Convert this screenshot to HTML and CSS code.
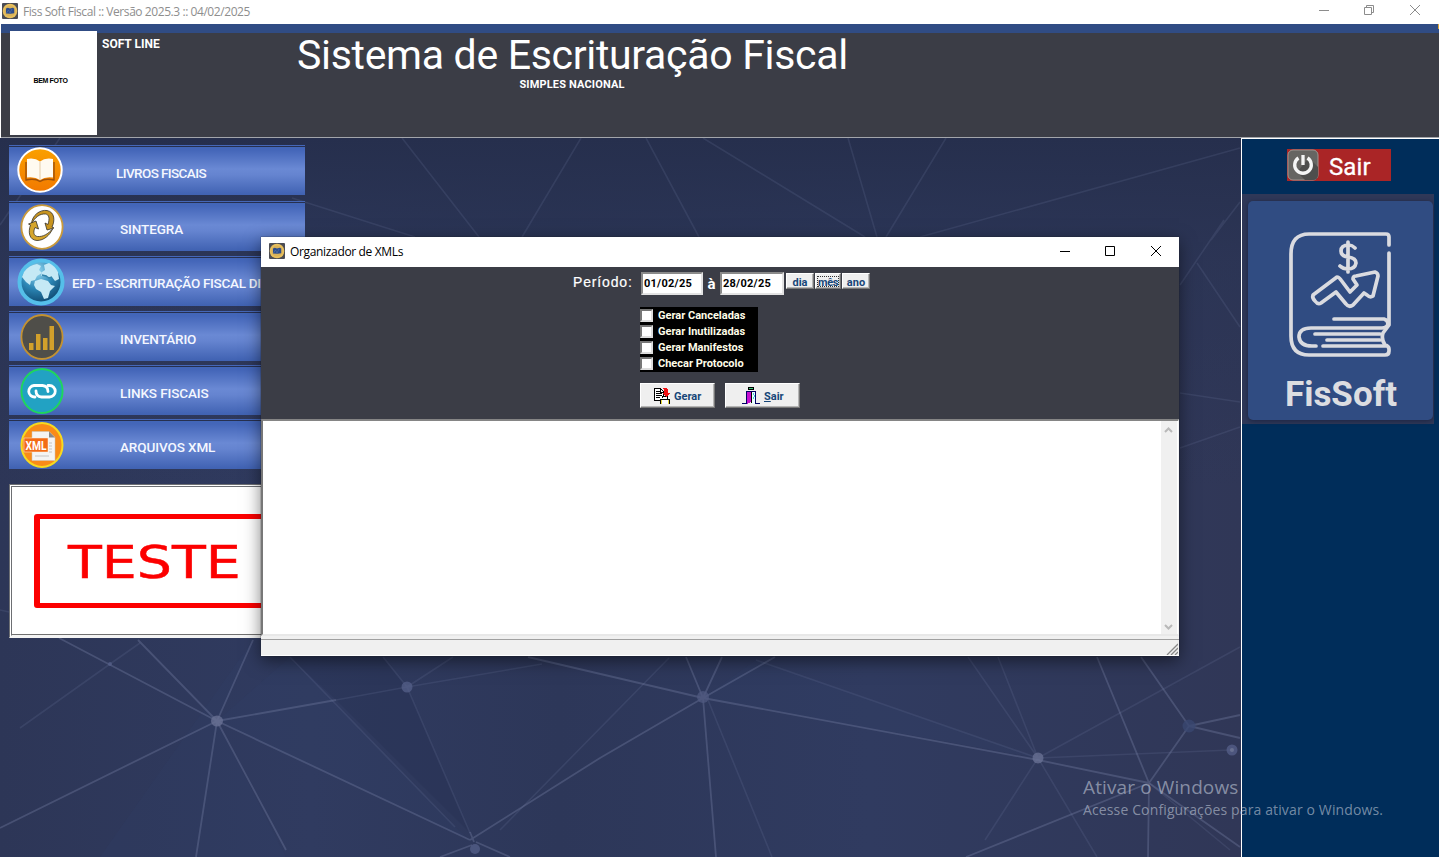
FILE: index.html
```html
<!DOCTYPE html>
<html lang="pt-BR">
<head>
<meta charset="utf-8">
<title>Fiss Soft Fiscal</title>
<link rel="stylesheet" href="styles.css">
</head>
<body>
<svg class="defs" width="0" height="0">
  <symbol id="app" viewBox="0 0 16 16">
    <rect width="16" height="16" rx="1" fill="#4b4c54"/>
    <circle cx="8" cy="8" r="7.3" fill="#e9c05c"/>
    <circle cx="8" cy="8" r="5.6" fill="#d9b25a"/>
    <path d="M4 10.600V5.600l1.800-.8L8 5.600l2.800-.8 1.400.7v4.800l-3.600.4z" fill="#2c4c8c"/>
    <path d="M4.500 10l2-3 1.500 3 2-4" stroke="#5772a4" stroke-width=".7" fill="none"/>
  </symbol>
</svg>
<div class="app">
  <div class="titlebar">
    <svg class="appicon" width="16" height="16"><use href="#app"/></svg>
    <span class="title">Fiss Soft Fiscal :: Versão 2025.3 :: 04/02/2025</span>
    <svg class="winbtns" width="104" height="16" viewBox="0 0 104 16" fill="none" stroke="#8c8c8c">
      <path d="M1 8.500h10M46.500 5.500h7v7h-7zM48.500 5.500v-2h7v7h-2M92 3l10 10M102 3l-10 10"/>
    </svg>
  </div>
  <header class="header">
    <div class="photo">BEM FOTO</div>
    <div class="company">SOFT LINE</div>
    <div class="heading">
      <h1>Sistema de Escrituração Fiscal</h1>
      <p>SIMPLES NACIONAL</p>
    </div>
    <i class="speck"></i>
  </header>
  <div class="main">
    <div class="desk">
      <svg class="net" width="1241" height="719" viewBox="0 138 1241 719">
        <path fill="#34426b" opacity=".2" d="M217 721L290 657L455 827L470 840zM217 721L253 640L100 857H286zM703 698L1038 758L756 660z"/>
        <path fill="#262e50" opacity=".3" d="M290 657L336 700L470 833L407 687L383 657z"/>
        <g fill="none" stroke="#8189ad" stroke-width="1.800" opacity=".32">
          <path d="M217 721L138 640M217 721L253 640M217 721L0 828M217 721L196 857M217 721L286 850M217 721L470 840M217 721L59 638M217 721L336 700M528 657L703 698M470 840L600 758L703 698M703 698L686 657M703 698L722 657M703 698L775 657M703 698L716 857M703 698L1038 760M1038 760L1149 783M1149 783L1097 657M1149 783L1189 726L1141 657M1189 726L1240 715M1189 726L1240 738M1149 783L966 857M1149 783L1148 857M1149 783L1240 847M472 845L440 857M476 842L510 857M470 832L474 842"/>
        </g>
        <g fill="none" stroke="#7780a6" stroke-width="1.600" opacity=".18">
          <path d="M336 700L407 687L383 657M407 687L453 657M407 687L542 664M407 687L470 833M290 657L455 827M140 643L110 664L20 728M669 658L500 830M708 700L772 857M1038 758L756 660M1038 758L968 657M1038 758L998 657M1038 758L1240 647M1038 758L1231 750M1038 758L985 840M1038 758L1097 857M1149 783L1230 850M402 138L479 237M581 138L522 237M646 138L699 237M703 138L865 237M848 138L877 237M946 138L886 237M1240 148L920 237M1240 202L1211 240M292 198L415 237M1224 220L1180 285M1197 263L1240 327M1180 393L1240 402M1180 448L1240 427M60 138L0 225M0 610L45 620"/>
        </g>
        <g fill="#6b7396" opacity=".75">
          <ellipse cx="217" cy="721" rx="6" ry="5.500"/><circle cx="407" cy="687" r="5.500" fill="#56608a"/><circle cx="703" cy="697" r="6" fill="#505a80"/><circle cx="1038" cy="758" r="5.500"/><circle cx="475" cy="849" r="5" fill="#56608a"/><circle cx="1189" cy="726" r="6.500" fill="#3a4872"/><circle cx="1232" cy="750" r="5.500" fill="#56608a"/><circle cx="1232" cy="750" r="2" fill="#7b83a5"/><circle cx="110" cy="664" r="2" fill="#56608a"/>
        </g>
      </svg>
      <nav class="menu">
        <a class="item first"><svg class="ic" width="46" height="46" viewBox="0 0 46 46">
          <defs><linearGradient id="or" x2="0" y2="1"><stop stop-color="#faa000"/><stop offset="1" stop-color="#f27900"/></linearGradient></defs>
          <circle cx="23" cy="23" r="21.700" fill="url(#or)" stroke="#fff" stroke-width="2"/>
          <path d="M9 15v18q9-2 14 1.500Q28 31 37 33V15" fill="none" stroke="#9e5009" stroke-width="1.400"/>
          <path d="M10 12Q18 10.500 23 14.500Q28 10.500 36 12V30.500Q28 29.500 23 33Q18 29.500 10 30.500z" fill="#fffaf0"/><path d="M23 14.500V33" stroke="#e4cba7"/></svg>
          <span>LIVROS FISCAIS</span></a>
        <a class="item"><svg class="ic" width="44" height="46" viewBox="0 0 44 46">
          <ellipse cx="22" cy="23" rx="20.600" ry="21.800" fill="#fff" stroke="#c99a3c" stroke-width="1.800"/>
          <path d="M11.500 20C12 11 20 5.500 27 6.500C35 8 35 17 32 23L34 24L27 26L25 19L28 20.500C30 14 29 10.500 25.500 10C20 9.500 15 13 11.500 20z" fill="#c89520" stroke="#333028" stroke-width=".8"/>
          <path d="M32.500 25C30 31 24 36.500 17 36.500C9 36 8 28 10.500 21L8.500 20L16 17L18.500 25L15 23.500C13 28 13.500 32 17.500 32.500C23 33 28 30 32.500 25z" fill="#d5a52c" stroke="#333028" stroke-width=".8"/></svg>
          <span>SINTEGRA</span></a>
        <a class="item efd"><svg class="ic" width="48" height="48" viewBox="0 0 48 48">
          <defs><radialGradient id="gl" cx=".4" cy=".25" r=".8"><stop stop-color="#9bdcf4"/><stop offset=".5" stop-color="#2b86b5"/><stop offset="1" stop-color="#0b4167"/></radialGradient></defs>
          <circle cx="24" cy="24" r="21.500" fill="url(#gl)" stroke="#55bfe9" stroke-width="4"/>
          <path d="M7 14q5-7 13-8l4 2-2 4 3 3-5 3-2 4-4 1-1 4-4-3-4-5zM27 7l5-2q6 3 9 9l1 7-4 2-3-4-4 1-2-3-5 1 1-4 3-2zM18 23l6-2 7 2 3 4 4 1-5 5-2 7-4 1-3-7-5-3-2-4z" fill="#c5e9f5"/>
          <path d="M25 17l4 1 3 2 3-1" fill="none" stroke="#3183aa" stroke-width="1.500"/></svg>
          <span>EFD - ESCRITURAÇÃO FISCAL DIGITAL</span></a>
        <a class="item"><svg class="ic" width="44" height="46" viewBox="0 0 44 46">
          <ellipse cx="22" cy="23" rx="20.600" ry="22" fill="#4f4e49" stroke="#c39231" stroke-width="1.800"/>
          <path d="M9 29h4.500v7H9zM16 20h4.500v16H16zM23 24h4.500v12H23zM29.500 12H34v24h-4.500z" fill="#d2a02b"/></svg>
          <span>INVENTÁRIO</span></a>
        <a class="item"><svg class="ic" width="44" height="46" viewBox="0 0 44 46">
          <ellipse cx="22" cy="23" rx="20.600" ry="22" fill="#22a2c3" stroke="#1fd65c" stroke-width="1.900"/>
          <g fill="none" stroke="#fff" stroke-width="2.800" stroke-linecap="round"><path d="M15 29a5.700 5.700 0 0 1 -1-11.500h8.500q5.500.5 5.500 6"/><path d="M28 17.500h1.500a5.700 5.700 0 0 1 0 11.500h-8q-5.500-.5-5.500-6"/></g></svg>
          <span>LINKS FISCAIS</span></a>
        <a class="item"><svg class="ic" width="44" height="46" viewBox="0 0 44 46">
          <ellipse cx="22" cy="23" rx="20.500" ry="21.900" fill="#f98b18" stroke="#f7d91f" stroke-width="2"/>
          <path d="M12 9.500h17l6 6v23H12z" fill="#f4f4f4" stroke="#c9c2b8" stroke-width=".5"/><path d="M29 9.500v6h6z" fill="#888"/>
          <path d="M29 21h3M29 24h3M29 27h3M29 30h3M15 34h14" stroke="#c4c4c4"/>
          <path d="M4 16h24v14H4z" fill="#f36b16" stroke="#fff1dd" stroke-width=".5"/>
          <text x="5.500" y="27.500" class="xml" textLength="21" lengthAdjust="spacingAndGlyphs">XML</text></svg>
          <span>ARQUIVOS XML</span></a>
      </nav>
      <div class="testbox"><div class="stamp"><span>TESTE</span></div></div>
    </div>
    <aside class="side">
      <a class="exit"><svg width="32" height="32" viewBox="0 0 32 32">
        <rect x="1" y="1" width="30" height="30" rx="5" fill="#666562" stroke="#a09690"/>
        <path d="M22 9l9 9v8q0 5-5 5h-8L10 23z" fill="#4e4e4d"/>
        <path d="M11.500 9a8.300 8.300 0 1 0 9 0M16 6v10" fill="none" stroke="#f5f5f5" stroke-width="3.300"/></svg><span>Sair</span></a>
      <div class="logo"><div class="card">
        <svg width="106" height="128" viewBox="0 0 106 128" fill="none" stroke="#dadbe0" stroke-width="3.700" stroke-linecap="round" stroke-linejoin="round">
          <path d="M102 14V6Q102 3 99 3H22Q4 3 4 23V105Q4 124 22 124H98Q102 124 102 120V118Q102 115 98 114Q94 108 96 102L102 94V22"/>
          <path d="M47 88H97Q101 89 101 93Q100 97 95 97H24Q12 97 12 106Q13 115 25 115H29M36 115H98M28 103H93M40 109H93"/>
          <path d="M26 64L50 46Q52 46 54 49L63 61L70 54L66 48Q66 45 69 45L88 41Q91 42 91 45L86 65Q83 67 80 64L77 62L66 74Q62 77 59 73L49 61L34 72Q31 74 28 70Q25 67 26 64z"/>
          <path d="M68 17Q65 14 62 14Q54 14 54 20Q54 25 61 26Q69 27 69 32Q68 38 61 38Q56 38 53 35M61 11V41"/>
        </svg>
        <b>FisSoft</b></div></div>
    </aside>
  </div>
</div>

<section class="dialog">
  <div class="dtitle">
    <svg class="appicon" width="16" height="16"><use href="#app"/></svg><span>Organizador de XMLs</span>
    <svg class="dbtns" width="104" height="16" viewBox="0 0 104 16" fill="none" stroke="#000"><path d="M1 8.500h10M46.500 3.500h9v9h-9zM92 3l10 10M102 3l-10 10"/></svg>
  </div>
  <div class="form">
    <div class="period">
      <label>Período:</label><div class="date d1">01/02/25</div><em>à</em><div class="date d2">28/02/25</div>
      <div class="quick"><button class="q1">dia</button><button class="q2"><u>mês</u></button><button class="q3">ano</button></div>
    </div>
    <div class="checks">
      <label><i></i><span>Gerar Canceladas</span></label><label><i></i><span>Gerar Inutilizadas</span></label><label><i></i><span>Gerar Manifestos</span></label><label><i></i><span>Checar Protocolo</span></label>
    </div>
    <div class="actions">
      <button><svg width="18" height="18" viewBox="0 0 18 18" shape-rendering="crispEdges">
        <path d="M1.500 1.500h6l3 3v9h-9z" fill="#fff" stroke="#000"/><path d="M3 4.500h4M3 6.500h6M3 8.500h6M3 10.500h6M7.500 2v3h3" stroke="#000" fill="none"/>
        <path d="M7 10h10v7H7z" fill="#fff"/><path d="M7.500 17v-5h9v5M9 11v-2h5v3" stroke="#000" fill="none"/><path d="M8 13v4M15 13v4" stroke="#e8dc3e"/>
        <path d="M9 1h4l2 2v3h2l-4 4-4-4h2V3z" fill="#ef0f12"/></svg><span>Gerar</span></button>
      <button class="b2"><svg width="18" height="18" viewBox="0 0 18 18" shape-rendering="crispEdges">
        <path d="M6 0h6v3H6z" fill="#000"/><path d="M7 1h4v1H7z" fill="#39c878"/>
        <path d="M4.500 4v13M13.500 4v13M4 4.500h10M0 16.500h6M12 16.500h6" stroke="#000064"/><path d="M5 5h4v10l-4 2z" fill="#c50fd0"/><path d="M9 5h1v11H9z" fill="#000"/><path d="M10 5h3v12h-3z" fill="#eaffff"/><path d="M11 6h1v2h-1zM12 8h1v2h-1zM11 10h1v2h-1z" fill="#40cbd9"/></svg><span><u>S</u>air</span></button>
    </div>
  </div>
  <div class="memo"><div class="scroll">
    <svg width="9" height="6" viewBox="0 0 9 6"><path d="M1 5l3.500-3.500L8 5" fill="none" stroke="#b9b9b9" stroke-width="2"/></svg>
    <svg width="9" height="6" viewBox="0 0 9 6"><path d="M1 1l3.500 3.500L8 1" fill="none" stroke="#b9b9b9" stroke-width="2"/></svg>
  </div></div>
  <div class="status"><svg width="12" height="12" viewBox="0 0 12 12" stroke="#888" stroke-width="1.300"><path d="M1 12L12 1M5 12l7-7M9 12l3-3"/></svg></div>
</section>

<div class="activate"><div class="a1">Ativar o Windows</div><div class="a2">Acesse Configurações para ativar o Windows.</div></div>
</body>
</html>
```
FILE: styles.css
```css
* { box-sizing: border-box; }
body { margin: 0; width: 1439px; height: 857px; overflow: hidden; position: relative; font-family: Roboto, "Liberation Sans", sans-serif; }
.defs { position: absolute; }
.app { display: flex; flex-direction: column; height: 857px; }

.titlebar { height: 24px; flex: none; display: flex; align-items: center; padding: 0 17px 2px 2px; background: #fff; }
.title { margin: 1px 0 0 5px; font: 12px "Open Sans", sans-serif; letter-spacing: -.43px; color: #8e8e8e; }
.winbtns { margin: -2px 0 0 auto; }

.header { height: 114px; flex: none; display: flex; position: relative; margin-left: 1px; padding: 7px 0 0 9px; background: #3b3d46; border-bottom: 1px solid #a2a5ab; background-image: linear-gradient(#304c84 9px, transparent 9px); }
.photo { width: 87px; height: 104px; background: #fff; font: bold 7px/99px "Liberation Sans", sans-serif; text-align: center; padding-right: 6px; letter-spacing: -.35px; color: #000; }
.company { margin: 5px 0 0 5px; width: 195px; font: bold 12px/16px Roboto, sans-serif; color: #fff; }
.heading { width: 550px; color: #fff; text-align: center; }
.heading h1 { margin: 0; font: 400 41px/48px Roboto, sans-serif; white-space: nowrap; letter-spacing: -.31px; text-align: left; }
.heading p { margin: -2px 0 0; font: bold 11px/15px Roboto, sans-serif; letter-spacing: .15px; }
.speck { position: absolute; right: 0; top: 0; width: 1px; height: 5px; background: #e0a83a; }

.main { flex: 1; display: flex; min-height: 0; }
.desk { width: 1241px; position: relative; padding: 7px 0 0 9px; background: linear-gradient(#262f4d 0, #29335399 120px, #2e3a5e00 350px), linear-gradient(90deg, #2d3657, #303b60 25%, #2d3759 45%, #303b60 70%, #303757); }
.net { position: absolute; left: 0; top: 0; }
.menu { position: relative; width: 296px; display: grid; grid-template-rows: repeat(6, 50px); row-gap: 5px; }
.item { display: flex; align-items: center; height: 50px; padding-left: 11px; border-top: 1px solid #4567b8; background: linear-gradient(#27304f 1px, #4266b8 1px, #4466b9 4px, #6a89d4 23px, #6584d0 29px, #4163b3 48px); }
.item:nth-child(2), .item:nth-child(3), .item:nth-child(4) { margin-top: 1px; }
.item:nth-child(6) { margin-top: -1px; }
.item.first, .item.efd { padding-left: 8px; }
.ic { flex: none; margin-top: 1px; }
.first .ic { margin-top: -1px; }
.efd .ic { margin-top: 0; }
.item span { margin: 5px 0 0 56px; font: 500 13.500px/16px Roboto, sans-serif; letter-spacing: -.1px; color: #f4f7ff; white-space: nowrap; }
.item.first span { margin: 5px 0 0 53px; letter-spacing: -.6px; }
.item.efd span { margin: 3px 0 0 7px; letter-spacing: -.3px; }
.xml { font: bold 12px Roboto, sans-serif; fill: #fff; }
.testbox { position: relative; width: 296px; height: 154px; margin-top: 14px; padding: 27px 22px 0 22px; background: #fff; border: 3px double #6d6f73; border-bottom: 3px solid #f4f4f4; box-shadow: inset 0 -1px #707070; }
.stamp { height: 94px; border: 5px solid #fc0000; border-left-width: 6px; border-radius: 3px; padding: 18px 0 0 28px; }
.stamp span { display: inline-block; font: 45px/52px "DejaVu Sans", sans-serif; color: #fc0000; -webkit-text-stroke: .5px #fc0000; transform: scaleX(1.23); transform-origin: 0 0; }

.side { width: 198px; border-left: 1px solid #fff; border-top: 1px solid #fff; background: #002d5a; padding-top: 10px; }
.exit { display: flex; align-items: center; width: 104px; height: 32px; margin-left: 45px; background: #aa2526; color: #fff; font: 400 24px/32px Roboto, sans-serif; -webkit-text-stroke: .3px #fff; }
.exit span { margin: 3px 0 0 10px; letter-spacing: .1px; }
.logo { width: 192px; height: 230px; margin-top: 13px; padding: 7px 1px 4px 6px; background: #2f3858; }
.card { height: 219px; border-radius: 5px; background: #304c82; box-shadow: 0 1px 5px #1a2340; display: flex; flex-direction: column; align-items: center; padding: 30px 1px 0 0; }
.card b { font: bold 35px/40px Roboto, sans-serif; color: #dcdde1; margin: 16px 0 0 2px; }

.dialog { position: absolute; left: 261px; top: 237px; width: 918px; height: 419px; display: flex; flex-direction: column; background: #f0f0f0; box-shadow: 0 0 1px #222, 0 5px 16px rgba(0,0,0,.5); }
.dtitle { height: 30px; background: #fff; display: flex; align-items: center; padding: 0 16px 2px 8px; font: 12px "Open Sans", sans-serif; color: #000; }
.dtitle span { margin: 1px 0 0 5px; letter-spacing: -.34px; }
.dbtns { margin-left: auto; }
.form { height: 152px; background: #3b3d46; }
.period { display: flex; align-items: flex-start; padding: 5px 0 0 312px; height: 40px; }
.period label { width: 68px; font: 14px/20px "Liberation Sans", sans-serif; letter-spacing: .85px; color: #fff; -webkit-text-stroke: .2px #fff; }
.date { height: 23px; background: #fff; border: 2px solid #e3e3e3; border-top-color: #8a8a8a; border-left-color: #8a8a8a; font: bold 11px/20px Roboto, sans-serif; padding-left: 1px; color: #000; letter-spacing: .25px; }
.d1 { width: 62px; } .d2 { width: 64px; }
.period em { width: 17px; text-align: center; font: bold 15px/24px Roboto, sans-serif; color: #fff; }
.quick { display: flex; margin: 1px 0 0 2px; }
button { padding: 0; border: 1px solid #fff; border-right: 1px solid #777; border-bottom: 1px solid #777; background: #efefef; color: #174678; font: bold 11px/14px Roboto, sans-serif; box-shadow: inset -1px -1px #b5b5b5; }
.quick button { height: 16px; width: 28px; padding-top: 3px; line-height: 12px; }
.quick .q2 { margin-left: 1px; width: 26px; padding-top: 0; }
.quick .q3 { margin-left: 1px; }
.q2 u { display: block; margin: 1px 1px; height: 11px; line-height: 11px; border: 1px dotted #333; text-decoration: none; letter-spacing: -.4px; }
.checks { width: 118px; height: 65px; margin-left: 379px; background: #000; }
.checks label { display: flex; align-items: center; height: 16px; font: bold 11px/16px Roboto, sans-serif; color: #fffde8; white-space: nowrap; }
.checks span { margin-top: 2px; }
.checks i { width: 13px; height: 13px; margin: 1px 5px 0 0; background: #fff; border: 2px solid #ddd; border-top-color: #777; border-left-color: #777; }
.actions { display: flex; gap: 10px; margin: 11px 0 0 379px; }
.actions button { width: 75px; height: 25px; display: flex; align-items: center; padding-left: 12px; }
.actions .b2 { padding-left: 16px; }
.actions span { margin: 2px 0 0 3px; }
.actions .b2 span { margin-left: 4px; }
.memo { height: 217px; background: #fff; border: 2px solid #777; border-top-color: #858585; border-right: 1px solid #f3f3f3; border-bottom: 2px solid #e8e8e8; display: flex; justify-content: flex-end; }
.scroll { width: 17px; background: #f0f0f0; border-right: 1px solid #fff; display: flex; flex-direction: column; justify-content: space-between; align-items: center; padding: 6px 2px 4px 0; }
.status { margin-top: 3px; height: 17px; border-top: 1px solid #a0a0a0; border-bottom: 1px solid #fff; display: flex; justify-content: flex-end; align-items: flex-end; padding-right: 1px; }

.activate { position: absolute; left: 1083px; top: 775px; color: rgba(190,197,213,.62); white-space: nowrap; font-family: "Open Sans", sans-serif; }
.a1 { font-size: 19px; line-height: 25px; letter-spacing: .12px; }
.a2 { font-size: 14px; line-height: 20px; letter-spacing: .13px; }
```
